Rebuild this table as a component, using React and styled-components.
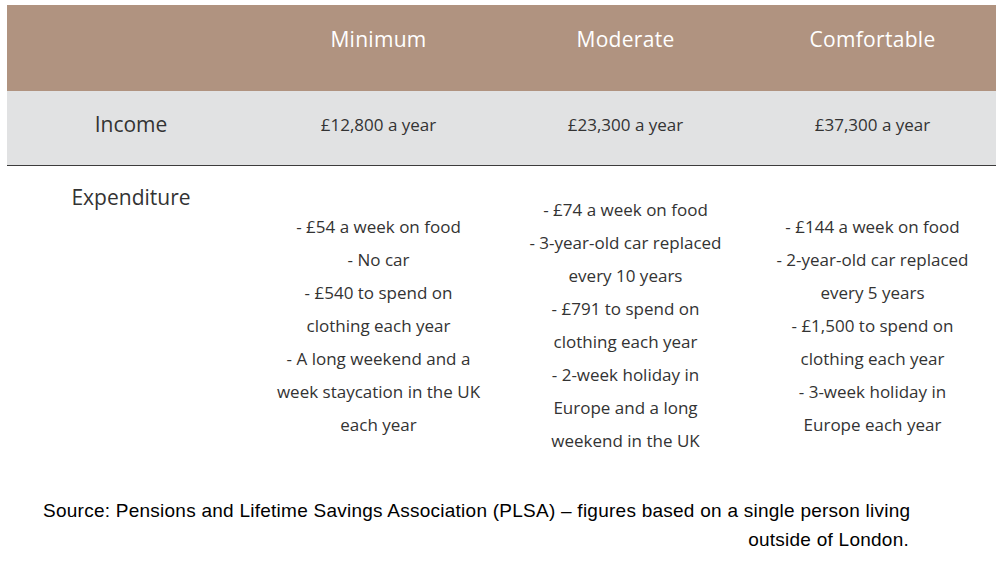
import React from "react"
import styled, { createGlobalStyle } from "styled-components"

const Global = createGlobalStyle`
  html, body {
    margin: 0;
    background: #ffffff;
  }
  body {
    font-family: "Open Sans", "Noto Sans", sans-serif;
  }
`

// each entry is the list of lines as they break in the table
const Levels = [
  {
    title: "Minimum",
    income: "£12,800 a year",
    lines: [
      "- £54 a week on food",
      "- No car",
      "- £540 to spend on",
      "clothing each year",
      "- A long weekend and a",
      "week staycation in the UK",
      "each year",
    ],
  },
  {
    title: "Moderate",
    income: "£23,300 a year",
    lines: [
      "- £74 a week on food",
      "- 3-year-old car replaced",
      "every 10 years",
      "- £791 to spend on",
      "clothing each year",
      "- 2-week holiday in",
      "Europe and a long",
      "weekend in the UK",
    ],
  },
  {
    title: "Comfortable",
    income: "£37,300 a year",
    lines: [
      "- £144 a week on food",
      "- 2-year-old car replaced",
      "every 5 years",
      "- £1,500 to spend on",
      "clothing each year",
      "- 3-week holiday in",
      "Europe each year",
    ],
  },
]

const App = () => {
  return (
    <Page>
      <Global />
      <Table>
        <HeadRow>
          <Cell />
          {Levels.map((l) => (
            <HeadCell key={l.title}>{l.title}</HeadCell>
          ))}
        </HeadRow>
        <IncomeRow>
          <Label>Income</Label>
          {Levels.map((l) => (
            <Value key={l.title}>{l.income}</Value>
          ))}
        </IncomeRow>
        <SpendRow>
          <Label top>Expenditure</Label>
          {Levels.map((l) => (
            <SpendCell key={l.title}>
              {l.lines.map((line, i) => (
                <div key={i}>{line}</div>
              ))}
            </SpendCell>
          ))}
        </SpendRow>
      </Table>
      <Source>
        Source: Pensions and Lifetime Savings Association (PLSA) – figures based on a single person living
        <br />
        outside of London.
      </Source>
    </Page>
  )
}

const Page = styled.div`
  width: 1008px;
  height: 563px;
  padding: 5px 12px 0 7px;
  box-sizing: border-box;
  overflow: hidden;
`

const Table = styled.div`
  width: 989px;
`

const Row = styled.div`
  display: grid;
  grid-template-columns: 248px 247px 247px 247px;
`

const HeadRow = styled(Row)`
  background: #b09380;
  height: 86px;
`

const Cell = styled.div``

const HeadCell = styled.div`
  color: #ffffff;
  font-size: 21px;
  font-weight: 500;
  text-align: center;
  padding-top: 20px;
  letter-spacing: 0.3px;
`

const IncomeRow = styled(Row)`
  background: #e1e2e3;
  height: 74px;
  border-bottom: 1px solid #3c3c3c;
  align-items: center;
`

const Label = styled.div`
  color: #333333;
  font-size: 21px;
  text-align: center;
  align-self: ${(p) => (p.top ? "start" : "center")};
  padding-top: ${(p) => (p.top ? "17px" : "0")};
  margin-top: ${(p) => (p.top ? "0" : "-9px")};
`

const Value = styled.div`
  color: #333333;
  font-size: 17px;
  text-align: center;
  margin-top: -7px;
`

const SpendRow = styled(Row)`
  height: 318px;
  align-items: center;
`

const SpendCell = styled.div`
  color: #333333;
  font-size: 17px;
  line-height: 33px;
  text-align: center;
  white-space: nowrap;
`

const Source = styled.div`
  width: 866px;
  margin: 12px 0 0 36px;
  font-family: "Liberation Sans", Arial, sans-serif;
  font-size: 19px;
  letter-spacing: 0.25px;
  line-height: 29px;
  color: #000000;
  text-align: right;
  white-space: nowrap;
`

export default App
